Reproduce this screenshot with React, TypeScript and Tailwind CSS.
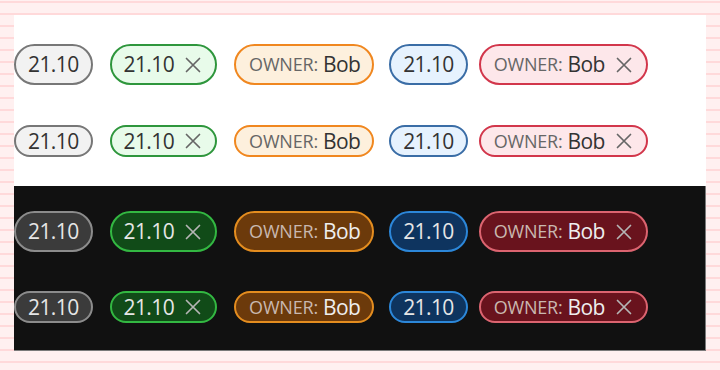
import React from 'react';

type Tone = 'gray' | 'green' | 'orange' | 'blue' | 'red';

const lightTone: Record<Tone, string> = {
  gray: 'bg-[#f2f2f2] border-[#777777] text-[#333333]',
  green: 'bg-[#e8fbea] border-[#2e963c] text-[#333333]',
  orange: 'bg-[#fdf0dd] border-[#f0871f] text-[#333333]',
  blue: 'bg-[#e6f2fe] border-[#3a6da6] text-[#333333]',
  red: 'bg-[#fde7ea] border-[#d2364b] text-[#333333]',
};

const darkTone: Record<Tone, string> = {
  gray: 'bg-[#3b3b3b] border-[#8c8c8c] text-[#e6e6e6]',
  green: 'bg-[#114b18] border-[#33b842] text-[#e6e6e6]',
  orange: 'bg-[#6c3a0b] border-[#e48d1f] text-[#eeeeee]',
  blue: 'bg-[#0e345f] border-[#2c87d9] text-[#e6e6e6]',
  red: 'bg-[#69131d] border-[#dc6470] text-[#eeeeee]',
};

const CloseIcon = ({ dark }: { dark: boolean }) => (
  <svg
    width="16"
    height="16"
    viewBox="0 0 16 16"
    className={dark ? 'text-[#b5b5b5]' : 'text-[#666666]'}
    fill="none"
    stroke="currentColor"
    strokeWidth="1.7"
    strokeLinecap="round"
  >
    <path d="M1.5 1.5 14.5 14.5M14.5 1.5 1.5 14.5" />
  </svg>
);

const Chip = ({
  tone,
  dark,
  small,
  label,
  value,
  closable,
  className = '',
}: {
  tone: Tone;
  dark: boolean;
  small: boolean;
  label?: string;
  value: string;
  closable?: boolean;
  className?: string;
}) => (
  <div
    className={`flex items-center rounded-full border-2 leading-[25px] ${small ? 'py-[1.5px]' : 'py-[6px]'} ${
      closable ? 'pl-[12px] pr-[14px]' : 'px-[12px]'
    } ${label ? 'pl-[13px]' : ''} ${dark ? darkTone[tone] : lightTone[tone]} ${className}`}
  >
    {label && (
      <span className={`text-[18px] tracking-[-0.2px] mr-[5px] ${dark ? 'text-[#c9b8b0]' : 'text-[#666666]'}`}>
        {label}
      </span>
    )}
    <span className="text-[21px] tracking-[-0.6px]">{value}</span>
    {closable && (
      <span className="ml-[11px] flex">
        <CloseIcon dark={dark} />
      </span>
    )}
  </div>
);

const ChipRow = ({ dark, small }: { dark: boolean; small: boolean }) => (
  <div className="flex items-center">
    <Chip tone="gray" dark={dark} small={small} value="21.10" />
    <Chip tone="green" dark={dark} small={small} value="21.10" closable className="ml-[17px]" />
    <Chip tone="orange" dark={dark} small={small} label="OWNER:" value="Bob" className="ml-[17px]" />
    <Chip tone="blue" dark={dark} small={small} value="21.10" className="ml-[15px]" />
    <Chip tone="red" dark={dark} small={small} label="OWNER:" value="Bob" closable className="ml-[11px]" />
  </div>
);

export default function App() {
  return (
    <div
      className="min-h-screen w-full pt-[15px] pl-[14px] bg-[#fff0f0] bg-[repeating-linear-gradient(to_bottom,#fff0f0_0px,#fff0f0_1px,#ffd9da_1px,#ffd9da_3px,#fff0f0_3px,#fff0f0_12px)]"
      style={{ fontFamily: '"Open Sans", "Noto Sans", sans-serif' }}
    >
      <div className="w-[692px]">
        {/* light */}
        <div className="bg-white pt-[29px] pb-[29px] flex flex-col gap-[40px]">
          <ChipRow dark={false} small={false} />
          <ChipRow dark={false} small />
        </div>
        {/* dark */}
        <div className="bg-[#111111] border-r border-b border-[#7a7a7a] pt-[25px] pb-[27px] flex flex-col gap-[39px]">
          <ChipRow dark small={false} />
          <ChipRow dark small />
        </div>
      </div>
    </div>
  );
}
